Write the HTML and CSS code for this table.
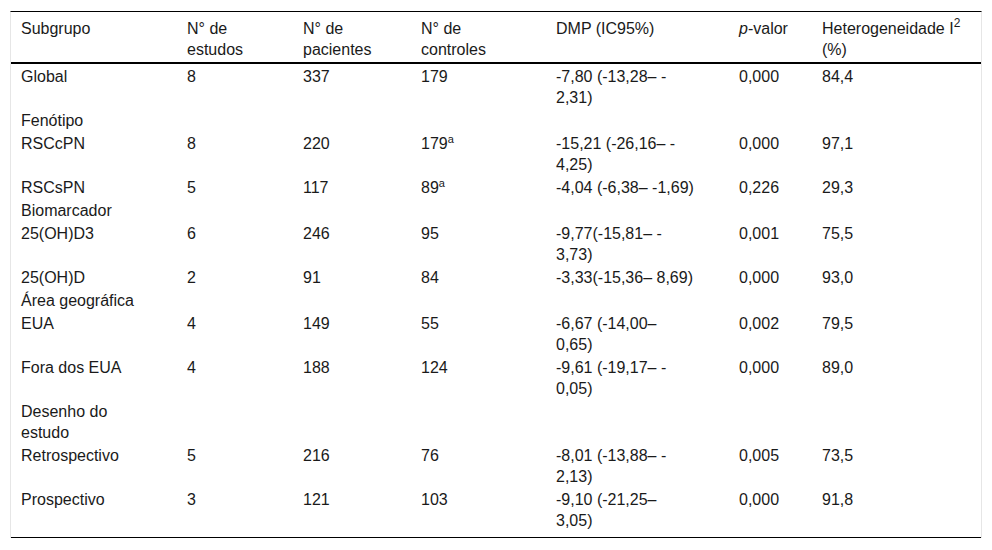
FILE: index.html
```html
<!DOCTYPE html>
<html lang="pt">
<head>
<meta charset="utf-8">
<title>Tabela</title>
<link rel="stylesheet" href="styles.css">
</head>
<body>
<div class="wrap">
<table class="data">
<colgroup>
<col class="c1"><col class="c2"><col class="c3"><col class="c4"><col class="c5"><col class="c6"><col class="c7">
</colgroup>
<thead>
<tr>
<th>Subgrupo</th>
<th>N° de estudos</th>
<th>N° de pacientes</th>
<th>N° de controles</th>
<th>DMP (IC95%)</th>
<th><i>p</i>-valor</th>
<th>Heterogeneidade I<sup>2</sup> (%)</th>
</tr>
</thead>
<tbody>
<tr><td>Global</td><td>8</td><td>337</td><td>179</td><td>-7,80 (-13,28– -<wbr>2,31)</td><td>0,000</td><td>84,4</td></tr>
<tr><td>Fenótipo</td><td></td><td></td><td></td><td></td><td></td><td></td></tr>
<tr><td>RSCcPN</td><td>8</td><td>220</td><td>179<sup class="sm">a</sup></td><td>-15,21 (-26,16– -<wbr>4,25)</td><td>0,000</td><td>97,1</td></tr>
<tr><td>RSCsPN</td><td>5</td><td>117</td><td>89<sup class="sm">a</sup></td><td>-4,04 (-6,38– -1,69)</td><td>0,226</td><td>29,3</td></tr>
<tr><td>Biomarcador</td><td></td><td></td><td></td><td></td><td></td><td></td></tr>
<tr><td>25(OH)D3</td><td>6</td><td>246</td><td>95</td><td>-9,77(-15,81– -<wbr>3,73)</td><td>0,001</td><td>75,5</td></tr>
<tr><td>25(OH)D</td><td>2</td><td>91</td><td>84</td><td>-3,33(-15,36– 8,69)</td><td>0,000</td><td>93,0</td></tr>
<tr><td>Área geográfica</td><td></td><td></td><td></td><td></td><td></td><td></td></tr>
<tr><td>EUA</td><td>4</td><td>149</td><td>55</td><td>-6,67 (-14,00– 0,65)</td><td>0,002</td><td>79,5</td></tr>
<tr><td>Fora dos EUA</td><td>4</td><td>188</td><td>124</td><td>-9,61 (-19,17– -<wbr>0,05)</td><td>0,000</td><td>89,0</td></tr>
<tr><td>Desenho do estudo</td><td></td><td></td><td></td><td></td><td></td><td></td></tr>
<tr><td>Retrospectivo</td><td>5</td><td>216</td><td>76</td><td>-8,01 (-13,88– -<wbr>2,13)</td><td>0,005</td><td>73,5</td></tr>
<tr class="last"><td>Prospectivo</td><td>3</td><td>121</td><td>103</td><td>-9,10 (-21,25– 3,05)</td><td>0,000</td><td>91,8</td></tr>
</tbody>
</table>
</div>
</body>
</html>
```
FILE: styles.css
```css
html, body {
  margin: 0;
  padding: 0;
  background: #fff;
}

.wrap {
  padding: 11px 0 0 10px;
}

.data {
  width: 972px;
  table-layout: fixed;
  border-collapse: separate;
  border-spacing: 0;
  border-top: 1px solid #000;
  border-left: 1px solid #e6e6e6;
  border-right: 1px solid #e6e6e6;
  font-family: "Liberation Sans", Arial, sans-serif;
  font-size: 16px;
  line-height: 21px;
  color: #1a1a1a;
}

.c1 { width: 166px; }
.c2 { width: 116px; }
.c3 { width: 118px; }
.c4 { width: 135px; }
.c5 { width: 183px; }
.c6 { width: 83px; }
.c7 { width: 169px; }

.data th,
.data td {
  text-align: left;
  vertical-align: top;
  font-weight: normal;
  padding: 2px 20px 0 10px;
}

.data th {
  padding-top: 6px;
  padding-bottom: 2px;
  border-bottom: 2px solid #000;
}

.data th:nth-child(5),
.data td:nth-child(5) {
  padding-right: 33px;
}

.data th:nth-child(7),
.data td:nth-child(7) {
  padding-right: 8px;
}

.data sup {
  font-size: 12px;
  line-height: 0;
  vertical-align: 7px;
}

.data sup.sm {
  font-size: 11px;
  vertical-align: 6px;
}

.data tr.last td {
  padding-bottom: 6px;
  border-bottom: 1px solid #000;
}
```
